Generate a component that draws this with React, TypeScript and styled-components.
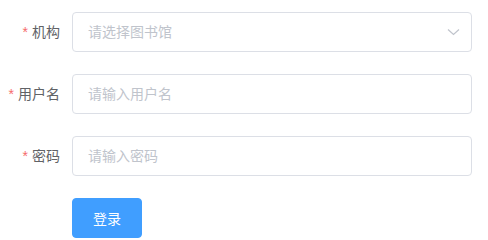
import React from 'react';
import styled, { createGlobalStyle } from 'styled-components';

const GlobalStyle = createGlobalStyle`
  html, body {
    margin: 0;
    padding: 0;
    background: #fff;
  }
  body {
    font-family: "Helvetica Neue", Helvetica, "Noto Sans CJK SC", "Microsoft YaHei", Arial, sans-serif;
  }
`;

const Form = styled.form`
  width: 472px;
  padding-top: 12px;
`;

const FormItem = styled.div`
  display: flex;
  align-items: center;
  height: 40px;
  margin-bottom: 22px;
`;

const Label = styled.label<{ required?: boolean }>`
  width: 72px;
  box-sizing: border-box;
  padding-right: 12px;
  text-align: right;
  font-size: 14px;
  line-height: 40px;
  color: #606266;
  flex-shrink: 0;

  &::before {
    content: ${props => (props.required ? "'*'" : "''")};
    color: #f56c6c;
    margin-right: 4px;
  }
`;

const Content = styled.div`
  position: relative;
  flex: 1;
`;

const Input = styled.input`
  display: block;
  width: 100%;
  height: 40px;
  box-sizing: border-box;
  padding: 0 15px;
  border: 1px solid #dcdfe6;
  border-radius: 4px;
  font-family: inherit;
  font-size: 14px;
  color: #606266;
  outline: none;
  background: #fff;

  &::placeholder {
    color: #c0c4cc;
  }
`;

const Arrow = styled.span`
  position: absolute;
  right: 12px;
  top: 0;
  height: 40px;
  display: flex;
  align-items: center;
  pointer-events: none;
`;

const Button = styled.button`
  margin-left: 72px;
  width: 70px;
  height: 40px;
  border: 1px solid #409eff;
  border-radius: 4px;
  background: #409eff;
  color: #fff;
  font-family: inherit;
  font-size: 14px;
  padding: 0;
  cursor: pointer;
`;

const App: React.FC = () => {
  return (
    <>
      <GlobalStyle />
      <Form onSubmit={e => e.preventDefault()}>
        <FormItem>
          <Label required>机构</Label>
          <Content>
            <Input readOnly placeholder="请选择图书馆" />
            <Arrow>
              <svg width="13" height="8" viewBox="0 0 13 8">
                <path d="M1 1.5 L6.5 6.5 L12 1.5" fill="none" stroke="#c0c4cc" strokeWidth="1.2" />
              </svg>
            </Arrow>
          </Content>
        </FormItem>
        <FormItem>
          <Label required>用户名</Label>
          <Content>
            <Input placeholder="请输入用户名" />
          </Content>
        </FormItem>
        <FormItem>
          <Label required>密码</Label>
          <Content>
            <Input type="password" placeholder="请输入密码" />
          </Content>
        </FormItem>
        <Button type="submit">登录</Button>
      </Form>
    </>
  );
};

export default App;
